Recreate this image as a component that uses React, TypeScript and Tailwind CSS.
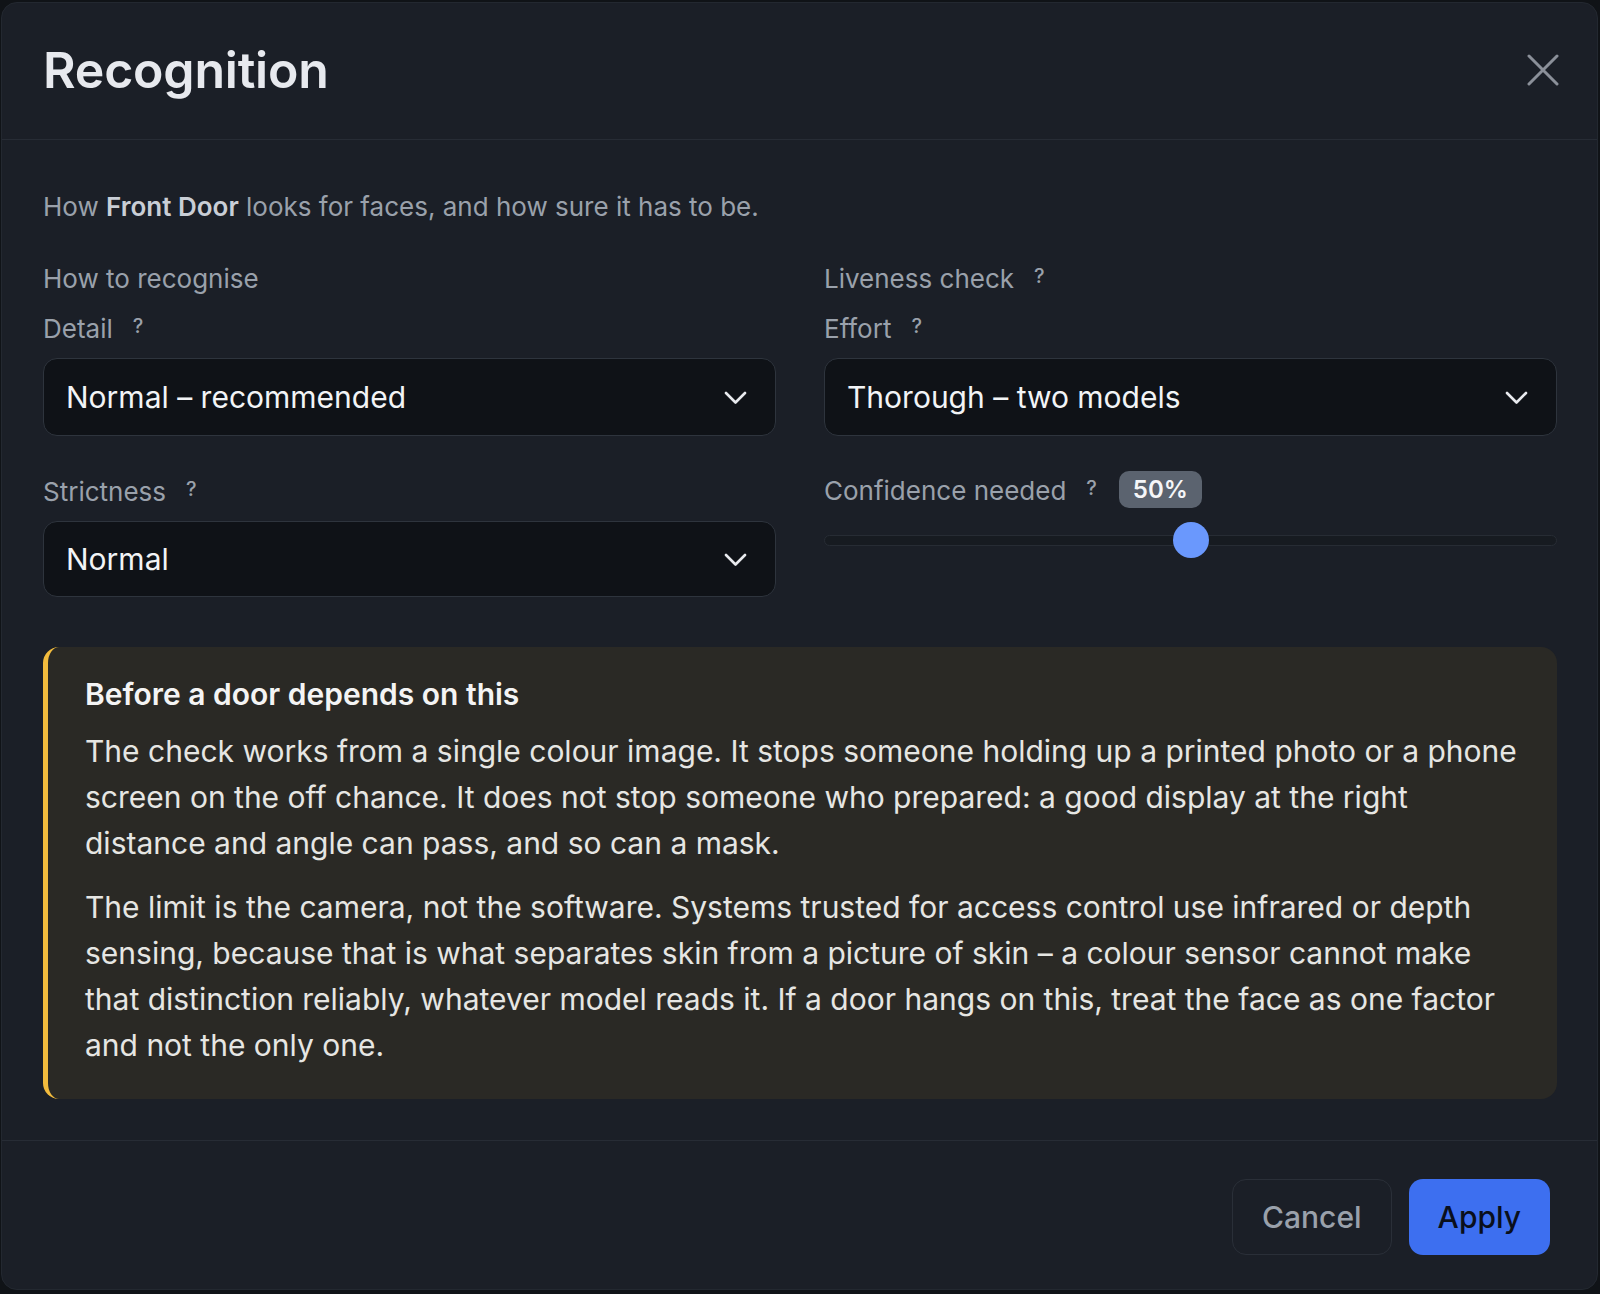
import { useState } from 'react';

const labelCls = 'text-[26px] leading-[36px] text-[#9aa1ab]';

function Help() {
  return (
    <span className="ml-[20px] -translate-y-[3px] text-[20px] font-medium leading-none text-[#9aa1ab]">?</span>
  );
}

function Chevron() {
  return (
    <svg width="23" height="13" viewBox="0 0 23 13" fill="none" stroke="#e8eaee" strokeWidth="2.6" strokeLinecap="round" strokeLinejoin="round">
      <path d="M2 2l9.5 9.5L21 2" />
    </svg>
  );
}

function FakeSelect({ value, tall = true }: { value: string; tall?: boolean }) {
  return (
    <button
      type="button"
      className={`flex w-full items-center justify-between rounded-[14px] border border-[#2e343d] bg-[#0f1217] pl-[22px] pr-[28px] text-left text-[30px] text-[#f2f4f6] ${
        tall ? 'h-[78px]' : 'h-[76px]'
      }`}
    >
      <span>{value}</span>
      <Chevron />
    </button>
  );
}

export default function App() {
  const [confidence] = useState(50);

  return (
    <div className="h-[1294px] w-full bg-[#101317] pl-[1px] pr-[2px] pt-[2px] font-['Inter',sans-serif]">
      <div className="flex h-[1288px] flex-col rounded-[16px] border border-[#232830] bg-[#1b1f27]">
        {/* header */}
        <div className="flex h-[137px] shrink-0 items-center justify-between border-b border-[#272c35] pb-[2px] pl-[41px] pr-[37px]">
          <h1 className="text-[50px] font-semibold leading-none tracking-[-0.2px] text-[#e7e9ee]">Recognition</h1>
          <button type="button" className="flex h-[34px] w-[34px] items-center justify-center">
            <svg width="32" height="32" viewBox="0 0 32 32" fill="none" stroke="#8b9099" strokeWidth="3" strokeLinecap="round">
              <path d="M2 2l28 28M30 2L2 30" />
            </svg>
          </button>
        </div>

        {/* body */}
        <div className="flex-1 pl-[41px] pr-[40px] pt-[49px]">
          <p className="text-[26px] leading-[36px] text-[#9aa1ab]">
            How <span className="font-semibold text-[#c9ced6]">Front Door</span> looks for faces, and how sure it has to be.
          </p>

          <div className="mt-[36px] grid grid-cols-2 gap-x-[48px]">
            <div className="flex flex-col">
              <div className={labelCls}>How to recognise</div>
              <div className={`mt-[14px] flex items-center ${labelCls}`}>
                Detail <Help />
              </div>
              <div className="mt-[11px]">
                <FakeSelect value="Normal – recommended" />
              </div>
              <div className={`mt-[38px] flex items-center ${labelCls}`}>
                Strictness <Help />
              </div>
              <div className="mt-[11px]">
                <FakeSelect value="Normal" tall={false} />
              </div>
            </div>

            <div className="flex flex-col">
              <div className={`flex items-center ${labelCls}`}>
                Liveness check <Help />
              </div>
              <div className={`mt-[14px] flex items-center ${labelCls}`}>
                Effort <Help />
              </div>
              <div className="mt-[11px]">
                <FakeSelect value="Thorough – two models" />
              </div>
              <div className={`mt-[36px] flex items-center ${labelCls}`}>
                Confidence needed <Help />
                <span className="ml-[22px] flex h-[37px] -translate-y-[1px] items-center rounded-[10px] bg-[#5b636f] px-[14px] text-[24px] font-semibold text-[#f5f6f8]">
                  {confidence}%
                </span>
              </div>
              {/* slider */}
              <div className="relative mt-[13px] h-[36px]">
                <div className="absolute left-0 right-0 top-[13px] h-[11px] rounded-full border border-[#272c34] bg-[#171b21]" />
                <div
                  className="absolute top-0 h-[36px] w-[36px] -translate-x-1/2 rounded-full bg-[#6a98fd]"
                  style={{ left: `${confidence}%` }}
                />
              </div>
            </div>
          </div>

          {/* warning */}
          <div className="mt-[50px] rounded-[16px] border-l-[5px] border-[#f2bb3d] bg-[#2a2925] pb-[31px] pl-[37px] pr-[28px] pt-[27px]">
            <div className="text-[30px] font-semibold leading-[40px] text-[#f4f4f4]">Before a door depends on this</div>
            <p className="mt-[14px] text-[30px] leading-[46px] text-[#e6e6e3]">
              The check works from a single colour image. It stops someone holding up a printed photo or a phone screen on the off chance. It does not stop someone who prepared: a good display at the right distance and angle can pass, and so can a mask.
            </p>
            <p className="mt-[18px] text-[30px] leading-[46px] text-[#e6e6e3]">
              The limit is the camera, not the software. Systems trusted for access control use infrared or depth sensing, because that is what separates skin from a picture of skin – a colour sensor cannot make that distinction reliably, whatever model reads it. If a door hangs on this, treat the face as one factor and not the only one.
            </p>
          </div>
        </div>

        {/* footer */}
        <div className="flex h-[149px] shrink-0 items-center justify-end gap-[17px] border-t border-[#272c35] pr-[47px] pt-[4px]">
          <button
            type="button"
            className="h-[76px] rounded-[14px] border border-[#2a2f38] px-[29px] text-[30px] font-medium text-[#9aa1ab]"
          >
            Cancel
          </button>
          <button
            type="button"
            className="h-[76px] rounded-[14px] bg-[#3d6ff0] px-[29px] text-[30px] font-medium text-[#0a0f1c]"
          >
            Apply
          </button>
        </div>
      </div>
    </div>
  );
}
